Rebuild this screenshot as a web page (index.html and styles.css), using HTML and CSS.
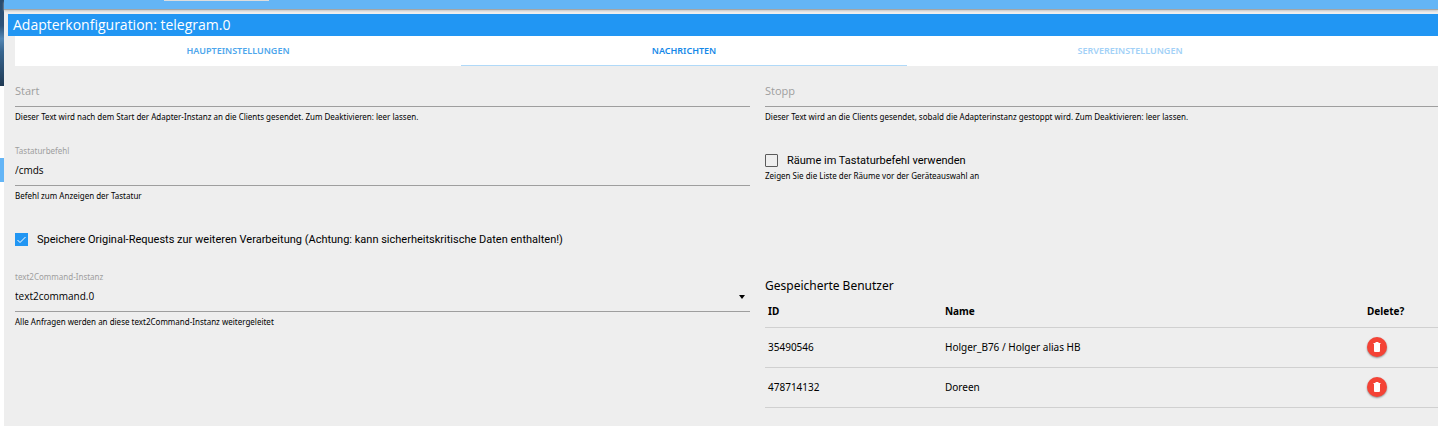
FILE: index.html
```html
<!DOCTYPE html>
<html lang="de">
<head>
<meta charset="utf-8">
<title>Adapterkonfiguration: telegram.0</title>
<link rel="stylesheet" href="styles.css">
</head>
<body>
<div class="app">
  <aside class="side">
    <div class="side-image"></div>
    <div class="side-gap"></div>
    <div class="side-active"></div>
  </aside>
  <main class="dialog">
    <div class="topbar"><div class="topbar-chip"></div></div>
    <h1 class="title">Adapterkonfiguration: telegram.0</h1>
    <nav class="tabs">
      <button class="tab" type="button">HAUPTEINSTELLUNGEN</button>
      <button class="tab tab-active" type="button">NACHRICHTEN</button>
      <button class="tab tab-disabled" type="button" disabled>SERVEREINSTELLUNGEN</button>
    </nav>
    <form class="form">
      <div class="field">
        <input class="input" type="text" placeholder="Start" aria-label="Start">
        <span class="help">Dieser Text wird nach dem Start der Adapter-Instanz an die Clients gesendet. Zum Deaktivieren: leer lassen.</span>
      </div>
      <div class="field">
        <input class="input" type="text" placeholder="Stopp" aria-label="Stopp">
        <span class="help">Dieser Text wird an die Clients gesendet, sobald die Adapterinstanz gestoppt wird. Zum Deaktivieren: leer lassen.</span>
      </div>
      <div class="field">
        <label class="label" for="cmd">Tastaturbefehl</label>
        <input class="input" id="cmd" type="text" value="/cmds">
        <span class="help">Befehl zum Anzeigen der Tastatur</span>
      </div>
      <div class="field">
        <label class="check"><input class="box" type="checkbox"><span>Räume im Tastaturbefehl verwenden</span></label>
        <span class="help help-tight">Zeigen Sie die Liste der Räume vor der Geräteauswahl an</span>
      </div>
      <div class="field field-wide">
        <label class="check"><input class="box" type="checkbox" checked><span>Speichere Original-Requests zur weiteren Verarbeitung (Achtung: kann sicherheitskritische Daten enthalten!)</span></label>
      </div>
      <div class="field">
        <label class="label" for="inst">text2Command-Instanz</label>
        <div class="select-wrap">
          <select class="input" id="inst"><option>text2command.0</option></select>
          <svg class="caret" viewBox="0 0 6 4" aria-hidden="true"><path d="M0 0h6L3 4z"/></svg>
        </div>
        <span class="help">Alle Anfragen werden an diese text2Command-Instanz weitergeleitet</span>
      </div>
      <section class="users">
        <h2 class="users-title">Gespeicherte Benutzer</h2>
        <table class="table">
          <thead>
            <tr><th class="col-id">ID</th><th class="col-name">Name</th><th class="col-delete">Delete?</th></tr>
          </thead>
          <tbody>
            <tr><td>35490546</td><td>Holger_B76 / Holger alias HB</td>
              <td><button class="delete" type="button" aria-label="Holger_B76 löschen"><svg class="trash" viewBox="0 0 8 10" aria-hidden="true"><path d="M2.5 0h3v1H7.500v1H7v7q0 1-1 1H2q-1 0-1-1V2H.500V1h2z"/></svg></button></td></tr>
            <tr><td>478714132</td><td>Doreen</td>
              <td><button class="delete" type="button" aria-label="Doreen löschen"><svg class="trash" viewBox="0 0 8 10" aria-hidden="true"><path d="M2.500 0h3v1H7.500v1H7v7q0 1-1 1H2q-1 0-1-1V2H.500V1h2z"/></svg></button></td></tr>
          </tbody>
        </table>
      </section>
    </form>
  </main>
</div>
</body>
</html>
```

FILE: styles.css
```css
* { box-sizing: border-box; }
body {
  margin: 0;
  background: #fff;
  color: #000;
  font-family: "Noto Sans", "Open Sans", sans-serif;
  font-size: 10px;
}
button, input, select { font: inherit; color: inherit; }
.app { display: flex; min-height: 100vh; }
.side { flex: 0 0 4px; }
.side-image { height: 86px; background: linear-gradient(#2a4a6c, #2c5278 30%, #5487b4 45%, #37658f 60%, #203a54); }
.side-gap { height: 72px; }
.side-active { height: 24px; background: #64b5f6; }
.dialog { flex: 1; min-width: 0; background: #eee; }
.topbar {
  height: 9px;
  margin-bottom: 5px;
  padding-left: 160px;
  background: #64b5f6;
  box-shadow: 0 1px 0 #a5a5a5, 0 2px 2px #c4c4c4;
}
.topbar-chip { width: 105px; height: 1px; background: #ddd; }
.title {
  margin: 0 0 0 4px;
  padding: 0 5px;
  background: #2196f3;
  color: #fff;
  font-family: "Open Sans", "Noto Sans", sans-serif;
  font-size: 14px;
  font-weight: 400;
  line-height: 22px;
}
.tabs {
  display: grid;
  grid-template-columns: 446fr 446fr 446fr 85fr;
  margin-left: 11px;
  background: #fff;
}
.tab {
  height: 30px;
  padding: 0;
  border: 0;
  border-bottom: 1px solid transparent;
  background: none;
  color: #4da6ec;
  font-size: 9px;
  font-weight: 600;
}
.tab-active { color: #1488e8; border-bottom-color: #b0d9f8; }
.tab-disabled { color: #a2d1f7; }
.form {
  display: grid;
  grid-template-columns: minmax(0, 735fr) minmax(0, 673fr);
  column-gap: 15px;
  row-gap: 18px;
  padding: 12px 0 18px 11px;
}
.field { display: flex; flex-direction: column; }
.field-wide { grid-column: 1 / -1; padding-bottom: 4px; }
.label { color: #9e9e9e; font-size: 8px; line-height: 12px; }
.input {
  width: 100%;
  height: 29px;
  padding: 0 0 2px;
  border: 0;
  border-bottom: 1px solid #9e9e9e;
  border-radius: 0;
  outline: 0;
  background: none;
  appearance: none;
  font-family: "Open Sans", "Noto Sans", sans-serif;
}
.input:placeholder-shown { padding-bottom: 4px; font-size: 11px; }
.input::placeholder { color: #9e9e9e; opacity: 1; }
.help { font-size: 8px; line-height: 20px; }
.help-tight { line-height: 12px; }
.select-wrap { display: flex; position: relative; }
.caret { position: absolute; right: 5px; top: 12px; width: 6px; height: 4px; }
.check {
  display: flex;
  align-items: center;
  gap: 9px;
  padding-top: 6px;
  font-family: Roboto, "Noto Sans", sans-serif;
  font-size: 11px;
  line-height: 19px;
}
.box {
  flex: none;
  width: 13px;
  height: 13px;
  margin: 0;
  border: 1px solid #5a5a5a;
  border-radius: 1px;
  appearance: none;
}
.box:checked {
  border: 0;
  border-radius: 0;
  background: #2196f3 url("data:image/svg+xml,%3Csvg xmlns='http://www.w3.org/2000/svg' viewBox='0 0 13 13'%3E%3Cpath d='M2.500 7l2.500 2.500L10.500 4' fill='none' stroke='white'/%3E%3C/svg%3E");
}
.users { padding-top: 5px; }
.users-title { margin: 0; font-size: 12px; font-weight: 400; line-height: 20px; }
.table { width: 100%; table-layout: fixed; border-collapse: collapse; }
.table th, .table td { padding: 0 3px; text-align: left; border-bottom: 1px solid #d0d0d0; }
.table th { height: 31px; }
.table td { height: 40px; }
.col-id { width: 26.3%; }
.col-name { width: 62.7%; }
.col-delete { width: 11%; }
.delete {
  display: flex;
  align-items: center;
  justify-content: center;
  width: 20px;
  height: 20px;
  padding: 0;
  border: 0;
  border-radius: 50%;
  background: #f44336;
  box-shadow: 0 1px 2px rgba(0, 0, 0, .4);
}
.trash { width: 8px; height: 10px; fill: #fff; }
```
